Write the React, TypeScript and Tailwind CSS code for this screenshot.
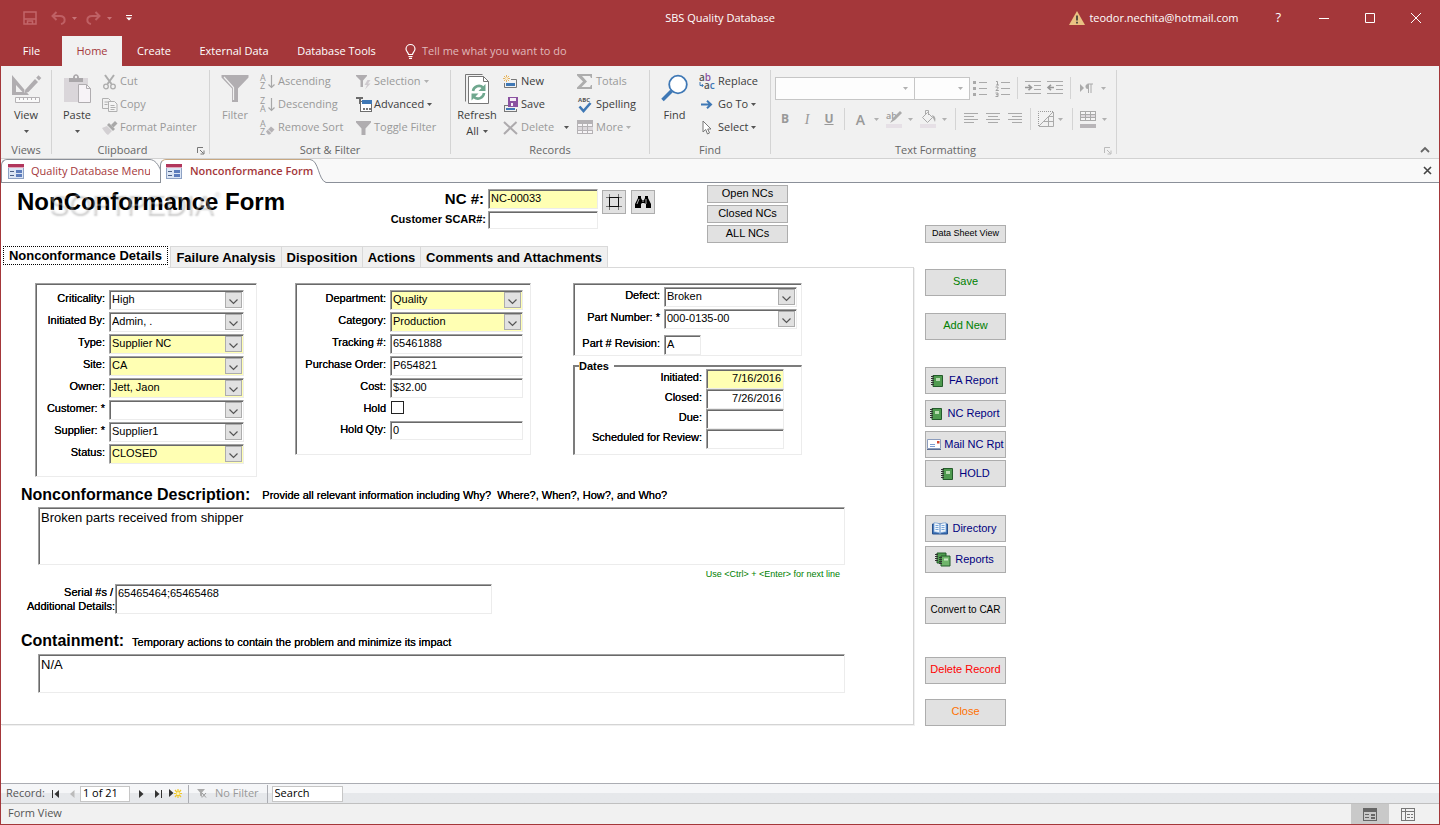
import type { ReactNode } from "react";

const SUNKEN =
  "border border-t-[#a0a0a0] border-l-[#a0a0a0] border-r-[#ececec] border-b-[#ececec] shadow-[inset_1px_1px_0_#696969]";
const HEAVY = "[text-shadow:0_0_0_#000]";

type SvgProps = { w: number; h: number; children: ReactNode; crisp?: boolean };
function Svg({ w, h, children, crisp }: SvgProps) {
  return (
    <svg
      width={w}
      height={h}
      viewBox={`0 0 ${w} ${h}`}
      fill="none"
      aria-hidden="true"
      className="shrink-0 overflow-visible"
      shapeRendering={crisp ? "crispEdges" : undefined}
    >
      {children}
    </svg>
  );
}

const Caret = ({ dim, white }: { dim?: boolean; white?: boolean }) => (
  <Svg w={5} h={3}>
    <path d="M0 0h5L2.5 3z" fill={white ? "#c77478" : dim ? "#b1b1b1" : "#555"} />
  </Svg>
);

/* ---------- ribbon icons ---------- */

const ViewIcon = () => (
  <Svg w={30} h={30}>
    <path d="M1 1v20h17L1 1zm4 10 6.500 7H5z" fill="#b0adb0" fillRule="evenodd" />
    <path d="M13 19l1-5L25 3l4 4-11 11z" fill="#f1f1f1" />
    <path d="M14.500 15.500 24 5l3 3-9.500 10-4.500 1.500z" fill="#b0adb0" />
    <path d="M25.200 3.800 27.500 1.200l2.800 2.800-2.300 2.500z" fill="#b0adb0" />
    <path d="M4.500 23.500h24v5h-24z" fill="#fafafa" stroke="#b5b2b5" />
    <path d="M8.500 24v2M12.500 24v2M16.500 24v2M20.500 24v2M24.500 24v2" stroke="#b5b2b5" />
  </Svg>
);
const PasteIcon = () => (
  <Svg w={26} h={31}>
    <path d="M0 5h24v24H0z" fill="#dad6da" />
    <path d="M5 9V5h4c0-5 6-5 6 0h4v4z" fill="#aaa7aa" />
    <circle cx="12" cy="4" r="1.200" fill="#f1f1f1" />
    <path d="M14.500 11.500h8l4 4v14h-12z" fill="#f7f3f7" stroke="#b0adb0" />
    <path d="M22.500 11.500v4h4" stroke="#b0adb0" />
  </Svg>
);
const CutIcon = () => (
  <Svg w={16} h={16}>
    <path d="M3 1l6.500 9M12 1L5.500 10" stroke="#adadad" strokeWidth="2" />
    <circle cx="4" cy="12.500" r="2.300" stroke="#adadad" strokeWidth="1.300" />
    <circle cx="11" cy="12.500" r="2.300" stroke="#adadad" strokeWidth="1.300" />
  </Svg>
);
const CopyIcon = () => (
  <Svg w={16} h={16}>
    <path d="M.5 1.500h6l2 2v8h-8zM2.500 5h4M2.500 7.500h3" stroke="#b0b0b0" />
    <path d="M6.500 4.500h6l2.500 2.500v7.500H6.500z" fill="#f4f4f4" stroke="#b0b0b0" />
    <path d="M8.500 8.500h4M8.500 10.500h5M8.500 12.500h4" stroke="#b0b0b0" />
  </Svg>
);
const PainterIcon = () => (
  <Svg w={16} h={16}>
    <path d="M0 8l5-2 5 5-4 4c-2-1-4-4-6-7z" fill="#d3d0d3" />
    <path d="M5 5l2-2 6 6-2 2z" fill="#a9a9a9" />
    <path d="M9 5l4-4 2.500 2.500-4 4z" fill="#a9a9a9" />
  </Svg>
);
const FilterBig = () => (
  <Svg w={28} h={30}>
    <path d="M.5 1h27v2.500L17 14.500V28h-6V14.500L.5 3.500z" fill="#b1aeb1" />
    <path d="M3 3l9.500 10.500V26" stroke="#f1f1f1" strokeWidth="1.200" />
  </Svg>
);
function SortIcon({ top, bottom }: { top: string; bottom: string }) {
  return (
    <Svg w={15} h={17}>
      <text x="0" y="7.500" fontSize="9" fontFamily="Open Sans, sans-serif" fill="#999">{top}</text>
      <text x="0" y="16" fontSize="9" fontFamily="Open Sans, sans-serif" fill="#999">{bottom}</text>
      <path d="M11.500 2v12M8.500 11.500l3 3 3-3" stroke="#a8a8a8" strokeWidth="1.200" />
    </Svg>
  );
}
const RemoveSortIcon = () => (
  <Svg w={15} h={17}>
    <text x="0" y="7.500" fontSize="9" fontFamily="Open Sans, sans-serif" fill="#999">A</text>
    <text x="0" y="16" fontSize="9" fontFamily="Open Sans, sans-serif" fill="#999">Z</text>
    <path d="M6 12.500l5-5 3.500 3-4.500 5H8z" fill="#b5b2b5" />
    <path d="M8 10.500l3.500 3.500" stroke="#f1f1f1" />
  </Svg>
);
const SelectionIcon = () => (
  <Svg w={16} h={16}>
    <path d="M0 1h11v1L7 6.500V13H4.500V6.500L0 2z" fill="#b0adb0" />
    <path d="M11.500 6l-3 5h2.500L9 15.500l5.500-6H12L14.500 6z" fill="#cfcbcf" />
  </Svg>
);
const AdvancedIcon = () => (
  <Svg w={16} h={16} crisp>
    <path d="M0 0h7v2H5v5H3V2H0z" fill="#6b6b6b" />
    <path d="M4.500 4.500h11v10h-11z" fill="#fff" stroke="#6e6e6e" />
    <path d="M6 3h10v4H6z" fill="#3f78b5" />
    <path d="M7 11h2v2H7zM10 11h2v2h-2zM13 11h2v2h-2z" fill="#777" />
  </Svg>
);
const ToggleFilterIcon = () => (
  <Svg w={16} h={16}>
    <path d="M0 1h15v1.500L9.500 8.500V15h-4V8.500L0 2.500z" fill="#b0adb0" />
  </Svg>
);
const RefreshIcon = () => (
  <Svg w={25} h={32}>
    <path d="M.5 28.500v-27h17" stroke="#777" />
    <path d="M3.500 3.500h15l5 5v22h-20z" fill="#fff" stroke="#777" />
    <path d="M18.500 3.500v5h5" stroke="#777" />
    <path d="M8 18a6 6 0 0 1 10-3.500" stroke="#6fa78e" strokeWidth="2.600" />
    <path d="M20.500 11v7h-7z" fill="#6fa78e" />
    <path d="M19 20a6 6 0 0 1-10 4" stroke="#6fa78e" strokeWidth="2.600" />
    <path d="M6.500 27.500v-7h7z" fill="#6fa78e" />
  </Svg>
);
const NewIcon = () => (
  <Svg w={15} h={14}>
    <path d="M3.500 0v7M0 3.500h7M1 1l5 5M6 1L1 6" stroke="#e6b45e" />
    <circle cx="3.500" cy="3.500" r="1.500" fill="#f8ecd4" />
    <path d="M8 4.500h5.500v8H1.500V8" stroke="#777" />
    <path d="M3 8h9v3H3z" fill="#3f78b5" />
  </Svg>
);
const SaveRecIcon = () => (
  <Svg w={16} h={16} crisp>
    <path d="M5 8.500H1.500v6h12v-3" stroke="#777" />
    <path d="M3 11h9v2H3z" fill="#3f78b5" />
    <path d="M5 0h10v10H5z" fill="#8b52a1" />
    <path d="M7 1h6v3H7zM8 6h4v3H8z" fill="#f4eef6" />
    <path d="M10 6h2v3h-2z" fill="#8b52a1" />
  </Svg>
);
const DeleteIcon = () => (
  <Svg w={15} h={14}>
    <path d="M1 1l13 12M13.500 1L1 13" stroke="#adaaad" strokeWidth="2" />
  </Svg>
);
const TotalsIcon = () => (
  <Svg w={16} h={15}>
    <path d="M0 0h15v4h-1l-1-2H5l5 5.500L4.500 13H13l1-2h1v4H0v-1.500l6-6L0 1.500z" fill="#adadad" />
  </Svg>
);
const SpellIcon = () => (
  <Svg w={16} h={17}>
    <text x="1" y="6" fontSize="6" fontWeight="700" fontFamily="Open Sans, sans-serif" fill="#555">ABC</text>
    <path d="M2.500 10.500l4 4.500 7-8" stroke="#3f78b5" strokeWidth="2.600" />
  </Svg>
);
const MoreIcon = () => (
  <Svg w={17} h={15} crisp>
    <path d="M.5.500h15v13H.5z" fill="#f7f5f7" stroke="#b5b2b5" />
    <path d="M1 1h15v3H1z" fill="#b5b2b5" />
    <path d="M1 7h15v3H1z" fill="#dcd8dc" />
    <path d="M5.500 4v10M10.500 4v10M1 6.500h15M1 10.500h15" stroke="#b5b2b5" />
  </Svg>
);
const FindIcon = () => (
  <Svg w={29} h={29}>
    <circle cx="18" cy="10.500" r="8.800" fill="#fff" stroke="#3f78b5" strokeWidth="1.800" />
    <path d="M11.500 17L2.500 26" stroke="#3f78b5" strokeWidth="3.600" />
  </Svg>
);
const ReplaceIcon = () => (
  <Svg w={17} h={17}>
    <text x="0" y="7.500" fontSize="10" fontWeight="600" fontFamily="Open Sans, sans-serif" fill="#555">
      a<tspan fill="#8b52a1">b</tspan>
    </text>
    <text x="5" y="15.500" fontSize="10" fontWeight="600" fontFamily="Open Sans, sans-serif" fill="#555">
      a<tspan fill="#3f78b5">c</tspan>
    </text>
    <path d="M1 9v3.500h3M2.800 11l1.500 1.500L2.800 14" stroke="#3f78b5" />
  </Svg>
);
const GoToIcon = () => (
  <Svg w={12} h={9}>
    <path d="M0 4.500h10M6 .8l4 3.700-4 3.700" stroke="#3f78b5" strokeWidth="2" />
  </Svg>
);
const SelectIcon = () => (
  <Svg w={10} h={15}>
    <path d="M1 1v11l2.700-2.500L5.500 14l2-1-1.800-4H9z" fill="#fff" stroke="#777" />
  </Svg>
);

/* ---------- shell ---------- */

function TitleBar() {
  return (
    <header className="bg-[#a4373a] text-white">
      <div className="grid h-9 grid-cols-[1fr_auto_1fr] items-center">
        <div className="flex items-center pl-[22px]">
          <button aria-label="Save" className="mr-[14px]">
            <Svg w={14} h={14}>
              <path d="M1 1h12v12H1zM1 8h12M4.500 13v-3h5v3" stroke="#c26569" strokeWidth="1.500" />
            </Svg>
          </button>
          <button aria-label="Undo" className="mr-[6px]">
            <Svg w={15} h={14}>
              <path d="M5.500 1L1.500 5l4 4M2 5h7c6 0 6 7 1 8" stroke="#bf6064" strokeWidth="2" />
            </Svg>
          </button>
          <Caret white />
          <button aria-label="Redo" className="mr-[6px] ml-[9px]">
            <Svg w={15} h={14}>
              <path d="M9.500 1l4 4-4 4M13 5H6c-6 0-6 7-1 8" stroke="#bf6064" strokeWidth="2" />
            </Svg>
          </button>
          <Caret white />
          <button aria-label="Customize Quick Access Toolbar" className="ml-[14px]">
            <Svg w={6} h={6}>
              <path d="M0 0h6v1H0zM0 2.500h6L3 5.500z" fill="#fff" />
            </Svg>
          </button>
        </div>
        <h1 className="text-[11px]">SBS Quality Database</h1>
        <div className="flex items-center justify-end pr-[18px]">
          <Svg w={16} h={14}>
            <path d="M8 0l8 14H0z" fill="#eac282" />
            <path d="M8 4.500V9.500M8 10.800v1.700" stroke="#333" strokeWidth="1.600" />
          </Svg>
          <span className="ml-1 w-[156px] text-[11px]">teodor.nechita@hotmail.com</span>
          <button aria-label="Help" className="ml-[30px] text-[13px]">?</button>
          <button aria-label="Minimize" className="ml-[38px]">
            <Svg w={10} h={10}><path d="M0 5.500h10" stroke="#fff" /></Svg>
          </button>
          <button aria-label="Maximize" className="ml-9">
            <Svg w={10} h={10}><path d="M.5.500h9v9h-9z" stroke="#fff" /></Svg>
          </button>
          <button aria-label="Close window" className="ml-9">
            <Svg w={10} h={10}><path d="M0 0l10 10M10 0L0 10" stroke="#fff" /></Svg>
          </button>
        </div>
      </div>
      <nav className="flex h-[30px] items-stretch text-[11px]">
        <button className="w-[61px]">File</button>
        <button className="w-[60px] bg-[#f1f1f1] text-[#a4373a]">Home</button>
        <button className="w-16">Create</button>
        <button className="w-24">External Data</button>
        <button className="w-[109px]">Database Tools</button>
        <button className="ml-[14px] flex items-center gap-[6px] text-[#e0b9ba]">
          <Svg w={11} h={15}>
            <path d="M3.500 10.500C3.500 8.500 1 7.500 1 5a4.500 4.500 0 0 1 9 0c0 2.500-2.500 3.500-2.500 5.500zM3.500 12.500h4M4 14.300h3" stroke="#fff" strokeWidth="1.200" />
          </Svg>
          Tell me what you want to do
        </button>
      </nav>
    </header>
  );
}

function Group({ label, width, launcher, children }: { label: string; width: string; launcher?: ReactNode; children: ReactNode }) {
  return (
    <section aria-label={label} className={`${width} my-1 flex shrink-0 flex-col border-r border-[#d4d4d4]`}>
      <div className="flex h-[69px] shrink-0">{children}</div>
      <div className={`relative h-[15px] pt-[3px] text-center text-[11px] leading-4 text-[#666] ${launcher ? "pr-4" : ""}`}>
        {label}
        {launcher}
      </div>
    </section>
  );
}

const Launcher = ({ dim }: { dim?: boolean }) => (
  <button aria-label="More options" className="absolute top-2 right-1">
    <Svg w={8} h={8}>
      <path d="M.5 6V.5H6M3 3l3.500 3.500M7 3.500V7H3.500" stroke={dim ? "#bbb" : "#777"} />
    </Svg>
  </button>
);

function Big({ icon, label, dim, width, children }: { icon: ReactNode; label: string; dim?: boolean; width: string; children?: ReactNode }) {
  return (
    <button className={`${width} flex shrink-0 flex-col items-center pt-[3px] text-[11px] leading-4 ${dim ? "text-[#999]" : "text-[#3c3c3c]"}`}>
      <span className="flex h-[31px] items-center">{icon}</span>
      <span className="mt-[3px]">{label}</span>
      <span className="flex h-4 items-center gap-1">{children}</span>
    </button>
  );
}

function Small({ icon, label, dim, caret, iconW = "w-[18px]" }: { icon: ReactNode; label: string; dim?: boolean; caret?: boolean; iconW?: string }) {
  return (
    <button className={`flex h-[23px] items-center text-[11px] whitespace-nowrap ${dim ? "text-[#999]" : "text-[#3c3c3c]"}`}>
      <span className={`${iconW} flex shrink-0 items-center`}>{icon}</span>
      {label}
      {caret && <span className="ml-[3px]"><Caret dim={dim} /></span>}
    </button>
  );
}

const Sep = () => <span className="block h-[22px] w-px bg-[#d4d4d4]" />;
const Lines = ({ rows }: { rows: [number, number][] }) => (
  <Svg w={15} h={14} crisp>
    {rows.map(([a, b], i) => (
      <path key={i} d={`M${a} ${i * 3 + 1.5}H${b}`} stroke="#aaa" />
    ))}
  </Svg>
);

function TextFormatting() {
  return (
    <div className="flex flex-col pl-1">
      <div className="mt-[7px] flex h-[22px] items-center">
        <select aria-label="Font" disabled className="h-[23px] w-[140px] appearance-none border border-[#c6c6c6] bg-[#fdfdfd]" />
        <span className="pointer-events-none -ml-3 w-[11px]"><Caret dim /></span>
        <select aria-label="Font size" disabled className="h-[23px] w-14 appearance-none border border-[#c6c6c6] bg-[#fdfdfd]" />
        <span className="pointer-events-none -ml-3 w-[15px]"><Caret dim /></span>
        <button aria-label="Bullets">
          <Svg w={14} h={16}>
            <path d="M6 2.500h8M6 8.500h8M6 14.500h8" stroke="#aaa" />
            <path d="M0 1h3v3H0zM0 7h3v3H0zM0 13h3v3H0z" fill="#aaa" />
          </Svg>
        </button>
        <button aria-label="Numbering" className="ml-2">
          <Svg w={15} h={17}>
            <path d="M6 2.500h9M6 8.500h9M6 14.500h9" stroke="#aaa" />
            <path d="M1 1.500h1.500V5M1 5h3M.5 7h2.500v1.500L.8 10.500h3M.5 13h2.500v3.500H.5M1 14.700h2" stroke="#999" strokeWidth=".9" />
          </Svg>
        </button>
        <span className="mx-[7px]"><Sep /></span>
        <button aria-label="Increase indent">
          <Svg w={16} h={14}>
            <path d="M0 .5h16M9 4.500h7M9 8.500h7M0 12.500h16" stroke="#aaa" />
            <path d="M0 6.500h6M3.500 3.800l3 2.700-3 2.700" stroke="#999" strokeWidth="1.600" />
          </Svg>
        </button>
        <button aria-label="Decrease indent" className="ml-[6px]">
          <Svg w={16} h={14}>
            <path d="M0 .5h16M9 4.500h7M9 8.500h7M0 12.500h16" stroke="#aaa" />
            <path d="M7 6.500H1M4 3.800L1 6.500l3 2.700" stroke="#999" strokeWidth="1.600" />
          </Svg>
        </button>
        <span className="mx-[7px]"><Sep /></span>
        <button aria-label="Text direction" className="ml-[2px] flex items-center gap-2">
          <Svg w={13} h={11}>
            <path d="M0 1v8l4-4z" fill="#aaa" />
            <path d="M8 1a2.500 2.500 0 0 0 0 5z" fill="#aaa" />
            <path d="M8.500 10V1M11 10V1M7.500 1H13" stroke="#aaa" />
          </Svg>
          <Caret dim />
        </button>
      </div>
      <div className="mt-[9px] flex h-[22px] items-center pl-[5px] text-[12px] text-[#999]">
        <button className="w-[10px] font-bold">B</button>
        <button className="ml-3 w-[10px] font-['Liberation_Serif',serif] text-[14px] italic">I</button>
        <button className="ml-3 w-[10px] font-bold underline">U</button>
        <span className="mr-[10px] ml-[10px]"><Sep /></span>
        <button aria-label="Font color" className="flex items-center gap-2">
          <span className="w-[11px] text-[14px] font-semibold">A</span><Caret dim />
        </button>
        <button aria-label="Highlight" className="ml-[7px] flex items-center gap-[6px]">
          <Svg w={16} h={18}>
            <path d="M0 14h16v4H0z" fill="#e6e0e6" />
            <text x="0" y="9" fontSize="9" fontWeight="600" fontFamily="Open Sans, sans-serif" fill="#999">ab</text>
            <path d="M4 13l3-5 7-7 2 2-7 7z" fill="#aaa" />
          </Svg>
          <Caret dim />
        </button>
        <button aria-label="Background color" className="ml-[7px] flex items-center gap-[6px]">
          <Svg w={16} h={18}>
            <path d="M0 14h16v4H0z" fill="#e6e0e6" />
            <path d="M7.500 2.500l5 5-5 5-5-5zM5.500 5V.5h3V5" stroke="#aaa" />
            <path d="M12 5c3 1 4 3 3 7l-2-4z" fill="#aaa" />
          </Svg>
          <Caret dim />
        </button>
        <span className="mr-2 ml-2"><Sep /></span>
        <button aria-label="Align left"><Lines rows={[[0, 14], [0, 10], [0, 14], [0, 10]]} /></button>
        <button aria-label="Align center" className="ml-[7px]"><Lines rows={[[0, 14], [2, 12], [0, 14], [2, 12]]} /></button>
        <button aria-label="Align right" className="ml-[7px]"><Lines rows={[[0, 14], [4, 14], [0, 14], [4, 14]]} /></button>
        <span className="mr-[7px] ml-[7px]"><Sep /></span>
        <button aria-label="Gridlines" className="flex items-center gap-1">
          <Svg w={16} h={16}>
            <path d="M.5 15V.5H15" stroke="#999" strokeDasharray="1 1" />
            <path d="M15.500 1v14.500H1M1 15L15 1M10.500 6v9M6 10.500h9M15 5.500h-4" stroke="#aaa" />
          </Svg>
          <Caret dim />
        </button>
        <span className="mr-[7px] ml-[9px]"><Sep /></span>
        <button aria-label="Alternate row color" className="flex items-center gap-[6px]">
          <Svg w={16} h={17} crisp>
            <path d="M0 0h16v10H0z" fill="#aaa" />
            <path d="M1 1h4v2H1zM6 1h4v2H6zM11 1h4v2h-4zM1 7h4v2H1zM6 7h4v2H6zM11 7h4v2h-4z" fill="#f5f5f5" />
            <path d="M1 4h4v2H1zM6 4h4v2H6zM11 4h4v2h-4z" fill="#dcd8dc" />
            <path d="M0 13h16v4H0z" fill="#b8b5b8" />
          </Svg>
          <Caret dim />
        </button>
      </div>
    </div>
  );
}

function Ribbon() {
  return (
    <div className="flex h-[93px] shrink-0 border-b border-[#d2d2d2] bg-[#f1f1f1]">
      <Group label="Views" width="w-[51px]">
        <Big icon={<ViewIcon />} label="View" width="w-[50px]"><Caret /></Big>
      </Group>
      <Group label="Clipboard" width="w-[158px]" launcher={<Launcher />}>
        <Big icon={<PasteIcon />} label="Paste" width="w-[50px]"><Caret /></Big>
        <div className="flex flex-col">
          <Small icon={<CutIcon />} label="Cut" dim />
          <Small icon={<CopyIcon />} label="Copy" dim />
          <Small icon={<PainterIcon />} label="Format Painter" dim />
        </div>
      </Group>
      <Group label="Sort & Filter" width="w-[241px]">
        <Big icon={<FilterBig />} label="Filter" dim width="w-[50px]" />
        <div className="flex w-[96px] flex-col">
          <Small icon={<SortIcon top="A" bottom="Z" />} label="Ascending" dim />
          <Small icon={<SortIcon top="Z" bottom="A" />} label="Descending" dim />
          <Small icon={<RemoveSortIcon />} label="Remove Sort" dim />
        </div>
        <div className="flex flex-col">
          <Small icon={<SelectionIcon />} label="Selection" dim caret />
          <Small icon={<AdvancedIcon />} label="Advanced" caret />
          <Small icon={<ToggleFilterIcon />} label="Toggle Filter" dim />
        </div>
      </Group>
      <Group label="Records" width="w-[199px]">
        <Big icon={<RefreshIcon />} label="Refresh" width="w-[52px]">All <Caret /></Big>
        <div className="flex w-[74px] flex-col">
          <Small icon={<NewIcon />} label="New" />
          <Small icon={<SaveRecIcon />} label="Save" />
          <div className="flex items-center justify-between pr-2">
            <Small icon={<DeleteIcon />} label="Delete" dim />
            <Caret />
          </div>
        </div>
        <div className="flex flex-col">
          <Small icon={<TotalsIcon />} label="Totals" dim iconW="w-[19px]" />
          <Small icon={<SpellIcon />} label="Spelling" iconW="w-[19px]" />
          <Small icon={<MoreIcon />} label="More" dim caret iconW="w-[19px]" />
        </div>
      </Group>
      <Group label="Find" width="w-[121px]">
        <Big icon={<FindIcon />} label="Find" width="w-[49px]" />
        <div className="flex flex-col">
          <Small icon={<ReplaceIcon />} label="Replace" iconW="w-[19px]" />
          <Small icon={<span className="pl-[2px]"><GoToIcon /></span>} label="Go To" caret iconW="w-[19px]" />
          <Small icon={<span className="pl-[3px]"><SelectIcon /></span>} label="Select" caret iconW="w-[19px]" />
        </div>
      </Group>
      <Group label="Text Formatting" width="w-[346px]" launcher={<Launcher dim />}>
        <TextFormatting />
      </Group>
      <button aria-label="Collapse the ribbon" className="mt-auto mr-[9px] mb-[5px] ml-auto">
        <Svg w={10} h={6}><path d="M1 5l4-4 4 4" stroke="#666" strokeWidth="1.800" /></Svg>
      </button>
    </div>
  );
}

const FormIcon = () => (
  <Svg w={16} h={15} crisp>
    <path d="M0 0h16v15H0z" fill="#8ea2c4" />
    <path d="M0 0h16v3H0z" fill="#b1365c" />
    <path d="M0 3h16v1H0z" fill="#e2a8ba" />
    <path d="M1 4h14v10H1z" fill="#dbe5f4" />
    <path d="M2 7h4v1H2zM2 11h4v1H2z" fill="#4b5f86" />
    <path d="M8 6h6v3H8zM8 10h6v3H8z" fill="#5d7dbc" />
  </Svg>
);

function DocTabs() {
  return (
    <div className="flex h-6 shrink-0 items-stretch border-b border-[#8b9099] bg-[#f9f9f9]" role="tablist">
      <button role="tab" className="flex items-stretch">
        <span className="flex items-center gap-[7px] rounded-tl-md border-t border-l border-[#8b9099] bg-white pl-[6px] text-[11px] whitespace-nowrap text-[#a4373a]">
          <FormIcon />
          <span className="w-[119px] text-left">Quality Database Menu</span>
        </span>
        <svg width="11" height="23" viewBox="0 0 11 23" className="-mr-px shrink-0" aria-hidden="true">
          <path d="M0 0.500C5 1 8 5 11 12V23H0z" fill="#fff" />
          <path d="M0 0.500C5 1 8 5 11 12" fill="none" stroke="#8b9099" />
        </svg>
      </button>
      <button role="tab" aria-selected="true" className="-mb-px flex items-stretch">
        <span className="z-10 flex items-center gap-2 rounded-tl-md border-t border-l border-t-[#c7a882] border-l-[#8b9099] bg-white pl-[5px] text-[11px] font-semibold whitespace-nowrap text-[#a4373a]">
          <FormIcon />
          <span className="w-[120px] text-left">Nonconformance Form</span>
        </span>
        <svg width="16" height="24" viewBox="0 0 16 24" className="shrink-0" aria-hidden="true">
          <path d="M0 0.500C9 1 8 21 16 23.500V24H0z" fill="#fff" />
          <path d="M0 0.500C9 1 8 21 16 23.500" fill="none" stroke="#8b9099" />
        </svg>
      </button>
      <button aria-label="Close tab" className="mr-[7px] ml-auto">
        <Svg w={9} h={9}><path d="M1 1l7 7M8 1L1 8" stroke="#444" strokeWidth="1.600" /></Svg>
      </button>
    </div>
  );
}

/* ---------- form controls ---------- */

type FieldProps = { id: string; label: string; value?: string; yellow?: boolean; labelW: string; w: string; h?: string; right?: boolean };

function Label({ id, w, children }: { id: string; w: string; children: ReactNode }) {
  return (
    <label htmlFor={id} className={`${w} ${HEAVY} shrink-0 text-right text-[11px] leading-4 whitespace-nowrap`}>
      {children}
    </label>
  );
}

function TextField({ id, label, value = "", yellow, labelW, w, h = "h-5", right }: FieldProps) {
  return (
    <div className="flex gap-1">
      <Label id={id} w={labelW}>{label}</Label>
      <input
        id={id}
        defaultValue={value}
        className={`${SUNKEN} ${w} ${h} ${yellow ? "bg-[#ffffb3]" : "bg-white"} ${right ? "text-right" : ""} px-[2px] pb-[2px] text-[11px] outline-none`}
      />
    </div>
  );
}

function SelectField({ id, label, value = "", yellow, labelW, w }: FieldProps) {
  return (
    <div className="flex gap-1">
      <Label id={id} w={labelW}>{label}</Label>
      <div className={`relative ${w}`}>
        <select
          id={id}
          defaultValue={value}
          className={`${SUNKEN} ${yellow ? "bg-[#ffffb3]" : "bg-white"} block h-5 w-full appearance-none px-[2px] pb-[2px] text-[11px] outline-none`}
        >
          <option>{value}</option>
        </select>
        <span className="pointer-events-none absolute top-[2px] right-[2px] flex h-4 w-[17px] items-center justify-center border border-[#adadad] bg-[#e1e1e1] pt-[2px]">
          <Svg w={9} h={5}><path d="M.5.500l4 4 4-4" stroke="#555" strokeWidth="1.200" /></Svg>
        </span>
      </div>
    </div>
  );
}

function Btn({ children, className }: { children: ReactNode; className: string }) {
  return (
    <button className={`flex items-center justify-center border border-[#adadad] bg-[#e1e1e1] whitespace-nowrap ${className}`}>
      {children}
    </button>
  );
}

const Book = () => (
  <Svg w={12} h={12}>
    <path d="M2 .5h9.500v11H2z" fill="#4f9a4f" stroke="#245c2b" />
    <path d="M5 3h4v3H5z" fill="#b8dcb0" />
    <path d="M0 1.500h3M0 3.500h3M0 5.500h3M0 7.500h3M0 9.500h3" stroke="#333" />
  </Svg>
);
const Books = () => (
  <Svg w={16} h={15}>
    <path d="M2 1h9v10H2z" fill="#4f9a4f" stroke="#245c2b" />
    <path d="M6 4h9v10H6z" fill="#6fb56a" stroke="#245c2b" />
    <path d="M9 6.500h4v2H9z" fill="#cdeac6" />
    <path d="M0 2.500h3M0 4.500h3M0 6.500h3M0 8.500h3M4 5.500h3M4 7.500h3M4 9.500h3M4 11.500h3" stroke="#333" />
  </Svg>
);
const Mail = () => (
  <Svg w={14} h={11}>
    <path d="M.5.500h13v9H.5z" fill="#fff" stroke="#8c9dbd" />
    <path d="M0 10.500h14" stroke="#5a6b90" />
    <path d="M10 2h2.500v2.500H10z" fill="#d4452f" />
    <path d="M3 5.500h5M3 7.500h5" stroke="#7f9dd0" />
  </Svg>
);
const OpenBook = () => (
  <Svg w={16} h={13}>
    <path d="M.5 2v10h15V2z" fill="#3c72b8" stroke="#28508c" />
    <path d="M2 .8c2.500 0 5 .5 6 1.700v9c-1-1-3.500-1.500-6-1.500zM14 .8c-2.500 0-5 .5-6 1.700v9c1-1 3.500-1.500 6-1.500z" fill="#eef5fc" stroke="#6b9ad0" strokeWidth=".7" />
    <path d="M3.500 3.500h3M3.500 5.500h3M3.500 7.500h3M9.500 3.500h3M9.500 5.500h3M9.500 7.500h3" stroke="#79a6d8" />
  </Svg>
);

function FormHeader() {
  return (
    <div className="flex h-[63px] items-start">
      <div className="relative w-[380px] shrink-0 pt-1 pl-4">
        <h2 className="text-[24px] leading-[30px] font-bold whitespace-nowrap">NonConformance Form</h2>
        <span className="pointer-events-none absolute top-[6px] left-12 flex text-[29px] leading-[30px] text-white/25 select-none [text-shadow:1px_2px_2px_rgba(0,0,0,0.2)]" aria-hidden="true">
          SOFTPEDIA
          <span className="text-[9px] leading-[10px]">®</span>
        </span>
      </div>
      <div className="mt-[6px] flex w-[217px] shrink-0 flex-col gap-[2px]">
        <div className="flex items-start justify-end gap-1">
          <label htmlFor="nc" className="text-[15px] leading-[20px] font-bold">NC #:</label>
          <input id="nc" defaultValue="NC-00033" className={`${SUNKEN} h-5 w-[110px] bg-[#ffffb3] px-[2px] pb-[2px] text-[11px] outline-none`} />
        </div>
        <div className="flex items-start justify-end gap-[2px]">
          <label htmlFor="scar" className="text-[11px] leading-4 font-bold whitespace-nowrap">Customer SCAR#:</label>
          <input id="scar" defaultValue="" className={`${SUNKEN} h-[18px] w-[110px] bg-white px-[2px] text-[11px] outline-none`} />
        </div>
      </div>
      <div className="mt-[7px] ml-1 flex gap-[5px]">
        <button aria-label="New number" className="flex size-6 items-center justify-center border border-[#adadad] bg-[#e1e1e1]">
          <Svg w={16} h={16} crisp>
            <path d="M3.500 0v16M12.500 0v16M0 3.500h16M0 12.500h16" stroke="#777" />
            <path d="M3.500 3.500h9v9h-9z" stroke="#111" />
          </Svg>
        </button>
        <button aria-label="Find" className="flex size-6 items-center justify-center border border-[#adadad] bg-[#e1e1e1]">
          <Svg w={16} h={14}>
            <path d="M3 1h3v2l1 2h2l1-2V1h3v2l3 6v4h-5V9L9 8H7L6 9v4H0V9l3-6z" fill="#000" />
            <path d="M4 4L2 9M11 4v5M8 4v3" stroke="#ddd" strokeWidth=".8" />
          </Svg>
        </button>
      </div>
      <div className="mt-[2px] ml-[52px] flex flex-col gap-[2px] text-[11px]">
        <Btn className="h-[18px] w-[81px] pb-[2px]">Open NCs</Btn>
        <Btn className="h-[18px] w-[81px] pb-[2px]">Closed NCs</Btn>
        <Btn className="h-[18px] w-[81px] pb-[2px]">ALL NCs</Btn>
      </div>
    </div>
  );
}

function FormTabs() {
  const tab = "flex h-[21px] items-center border-t border-r border-[#d9d9d9] bg-[#f0f0f0] pt-[2px] whitespace-nowrap";
  return (
    <div role="tablist" className="flex items-end text-[13px] font-bold">
      <button role="tab" aria-selected="true" className="mr-[2px] mb-[2px] ml-[2px] flex h-[19px] w-[165px] items-center justify-center border border-dotted border-black whitespace-nowrap">
        Nonconformance Details
      </button>
      <button role="tab" className={`${tab} w-[112px] justify-center border-l`}>Failure Analysis</button>
      <button role="tab" className={`${tab} w-[81px] justify-center`}>Disposition</button>
      <button role="tab" className={`${tab} w-[58px] justify-center`}>Actions</button>
      <button role="tab" className={`${tab} w-[187px] justify-center`}>Comments and Attachments</button>
    </div>
  );
}

function Details() {
  const a = { labelW: "w-[69px]", w: "w-[135px]" };
  const b = { labelW: "w-[90px]", w: "w-[133px]" };
  const c = { labelW: "w-[86px]", w: "w-[133px]" };
  const d = { labelW: "w-[127px]", w: "w-[78px]" };
  return (
    <div className="border-r border-b border-[#d4d4d4] pb-[31px] shadow-[1px_1px_0_#f0f0f0]">
      <div className="ml-[167px] h-px bg-[#d9d9d9]" />
      <div className="flex items-start pt-[15px] pl-[34px]">
        <div className={`${SUNKEN} flex h-[194px] w-[222px] flex-col gap-[2px] pt-[6px]`}>
          <SelectField id="criticality" label="Criticality:" value="High" {...a} />
          <SelectField id="initiatedBy" label="Initiated By:" value="Admin, ." {...a} />
          <SelectField id="type" label="Type:" value="Supplier NC" yellow {...a} />
          <SelectField id="site" label="Site:" value="CA" yellow {...a} />
          <SelectField id="owner" label="Owner:" value="Jett, Jaon" yellow {...a} />
          <SelectField id="customer" label="Customer: *" {...a} />
          <SelectField id="supplier" label="Supplier: *" value="Supplier1" {...a} />
          <SelectField id="status" label="Status:" value="CLOSED" yellow {...a} />
        </div>
        <div className={`${SUNKEN} ml-[38px] flex h-[172px] w-[236px] flex-col gap-[2px] pt-[6px]`}>
          <SelectField id="department" label="Department:" value="Quality" yellow {...b} />
          <SelectField id="category" label="Category:" value="Production" yellow {...b} />
          <TextField id="tracking" label="Tracking #:" value="65461888" {...b} />
          <TextField id="po" label="Purchase Order:" value="P654821" {...b} />
          <TextField id="cost" label="Cost:" value="$32.00" {...b} />
          <div className="flex h-[19px] gap-[5px]">
            <Label id="hold" w="w-[90px]">Hold</Label>
            <input id="hold" type="checkbox" className="mt-[1px] size-[13px] appearance-none border border-[#222] bg-white" />
          </div>
          <TextField id="holdQty" label="Hold Qty:" value="0" {...b} h="h-[19px]" />
        </div>
        <div className="ml-[42px] w-[229px]">
          <div className={`${SUNKEN} flex h-[73px] flex-col gap-[2px] pt-[3px]`}>
            <SelectField id="defect" label="Defect:" value="Broken" {...c} />
            <SelectField id="partNumber" label="Part Number: *" value="000-0135-00" {...c} />
            <div className="mt-1">
              <TextField id="revision" label="Part # Revision:" value="A" labelW="w-[86px]" w="w-[37px]" />
            </div>
          </div>
          <fieldset className="mt-[3px] h-[96px] border-t-2 border-r border-b border-l-2 border-t-[#7c7c7c] border-r-[#ececec] border-b-[#ececec] border-l-[#7c7c7c]">
            <legend className="ml-1 pr-[5px] text-[11px] leading-[14px] font-bold">Dates</legend>
            <div className="-mt-1 flex flex-col">
              <TextField id="initiated" label="Initiated:" value="7/16/2016" yellow right {...d} />
              <TextField id="closed" label="Closed:" value="7/26/2016" right {...d} />
              <TextField id="due" label="Due:" {...d} />
              <TextField id="review" label="Scheduled for Review:" {...d} />
            </div>
          </fieldset>
        </div>
      </div>
      <div className="mt-2 flex h-5 items-center gap-3 pl-5">
        <label htmlFor="description" className="text-[16px] leading-5 font-bold whitespace-nowrap">Nonconformance Description:</label>
        <p className={`${HEAVY} text-[11px] whitespace-pre`}>{"Provide all relevant information including Why?  Where?, When?, How?, and Who?"}</p>
      </div>
      <div className="mt-[2px] ml-[37px] w-[807px]">
        <textarea id="description" defaultValue="Broken parts received from shipper" className={`${SUNKEN} block h-[58px] w-full resize-none bg-white px-[2px] pt-[2px] text-[13px] leading-4 outline-none`} />
        <p className="mt-[2px] pr-[5px] text-right text-[9px] leading-[14px] text-[#008000]">Use &lt;Ctrl&gt; + &lt;Enter&gt; for next line</p>
      </div>
      <div className="mt-[3px] flex">
        <label htmlFor="serials" className={`${HEAVY} w-[114px] shrink-0 pt-px text-right text-[11px] leading-[14px] whitespace-nowrap`}>
          <span className="pr-[2px]">Serial #s /</span><br />Additional Details:
        </label>
        <textarea id="serials" defaultValue="65465464;65465468" className={`${SUNKEN} block h-[30px] w-[377px] resize-none bg-white px-[2px] pt-[1px] text-[11px] leading-[14px] outline-none`} />
      </div>
      <div className="mt-[17px] flex h-5 items-center gap-2 pl-5">
        <label htmlFor="containment" className="text-[16px] leading-5 font-bold">Containment:</label>
        <p className={`${HEAVY} pt-[2px] text-[11px] whitespace-nowrap`}>Temporary actions to contain the problem and minimize its impact</p>
      </div>
      <textarea id="containment" defaultValue="N/A" className={`${SUNKEN} mt-[3px] ml-[37px] block h-[39px] w-[807px] resize-none bg-white px-[2px] pt-[2px] text-[13px] leading-4 outline-none`} />
    </div>
  );
}

function SideButtons() {
  const navy = "text-[#00007f] text-[11px]";
  return (
    <aside className="ml-[11px] flex w-[81px] shrink-0 flex-col pt-[42px]">
      <Btn className="h-[18px] pb-px text-[9px]">Data Sheet View</Btn>
      <Btn className="mt-[26px] h-[27px] pb-[2px] text-[11px] text-[#008000]">Save</Btn>
      <Btn className="mt-[17px] h-[27px] pb-[2px] text-[11px] text-[#008000]">Add New</Btn>
      <Btn className={`mt-[27px] h-[27px] gap-[6px] pr-[2px] ${navy}`}><Book />FA Report</Btn>
      <Btn className={`mt-[6px] h-[27px] gap-[6px] pr-[2px] ${navy}`}><Book />NC Report</Btn>
      <Btn className={`mt-1 h-[27px] gap-[3px] ${navy}`}><Mail />Mail NC Rpt</Btn>
      <Btn className={`mt-[2px] h-[27px] gap-[6px] ${navy}`}><Book />HOLD</Btn>
      <Btn className={`mt-7 h-[27px] gap-1 pr-[2px] ${navy}`}><OpenBook />Directory</Btn>
      <Btn className={`mt-1 h-[27px] gap-1 pr-[2px] ${navy}`}><Books />Reports</Btn>
      <Btn className="mt-6 h-[27px] pb-[2px] text-[10px]">Convert to CAR</Btn>
      <Btn className="mt-[33px] h-[27px] pb-[2px] text-[11px] text-[#ff0000]">Delete Record</Btn>
      <Btn className="mt-[15px] h-[27px] pb-[2px] text-[11px] text-[#ff7000]">Close</Btn>
    </aside>
  );
}

function RecordNav() {
  return (
    <div className="flex h-5 shrink-0 items-center border-t border-[#abadb3] bg-linear-to-b from-[#f5f6f8] from-50% to-[#e6e8eb] to-50% pl-[5px] text-[11px] text-[#555]">
      <span>Record:</span>
      <button aria-label="First record" className="ml-[7px]">
        <Svg w={8} h={8}><path d="M.5 0v8" stroke="#333" /><path d="M7 0v8L2.500 4z" fill="#333" /></Svg>
      </button>
      <button aria-label="Previous record" className="ml-[10px]">
        <Svg w={5} h={8}><path d="M4.500 0v8L0 4z" fill="#bbb" /></Svg>
      </button>
      <input aria-label="Current record" defaultValue="1 of 21" className="ml-[5px] h-4 w-[50px] border border-[#c6c6c6] bg-white px-[2px] text-[11px] text-black outline-none" />
      <button aria-label="Next record" className="ml-[9px]">
        <Svg w={5} h={8}><path d="M0 0v8l4.500-4z" fill="#333" /></Svg>
      </button>
      <button aria-label="Last record" className="ml-[11px]">
        <Svg w={8} h={8}><path d="M6.500 0v8" stroke="#333" /><path d="M0 0v8l4.500-4z" fill="#333" /></Svg>
      </button>
      <button aria-label="New record" className="ml-[6px]">
        <Svg w={13} h={9}>
          <path d="M0 0v8l4.500-4z" fill="#333" />
          <path d="M9 0v9M5 4.500h8M6 1l6 7M12 1L6 8" stroke="#f0c92c" strokeWidth="1.200" />
          <circle cx="9" cy="4.500" r="1.500" fill="#fff6c0" />
        </Svg>
      </button>
      <span className="ml-[6px] h-[18px] w-px bg-[#abadb3]" />
      <button className="flex items-center gap-2 pl-2 text-[#999]">
        <Svg w={10} h={9}>
          <path d="M0 0h8L5 3.500V8L3 6.500v-3z" fill="#aaa" />
          <path d="M5 4l4 4.500M9 4L5 8.500" stroke="#999" />
        </Svg>
        No Filter
      </button>
      <span className="ml-[8px] h-[18px] w-px bg-[#abadb3]" />
      <input aria-label="Search" defaultValue="Search" className="ml-1 h-4 w-[71px] border border-[#c6c6c6] bg-white px-[2px] text-[11px] text-black outline-none" />
    </div>
  );
}

function StatusBar() {
  return (
    <footer className="flex h-[21px] shrink-0 items-stretch border-t border-[#c0c0c0] bg-[#f1f1f1] text-[11px] text-[#555]">
      <span className="flex items-center pb-[2px] pl-[7px]">Form View</span>
      <button aria-label="Form view" className="ml-auto flex w-[38px] items-center justify-center bg-[#c9c9c9]">
        <Svg w={14} h={13} crisp>
          <path d="M.5.500h13v12H.5z" stroke="#666" />
          <path d="M0 0h14v4H0z" fill="#666" />
          <path d="M2 6h4v1H2zM2 9h4v1H2zM8 6h4v2H8zM8 9h4v2H8z" fill="#666" />
        </Svg>
      </button>
      <button aria-label="Layout view" className="mr-3 flex w-[38px] items-center justify-center">
        <Svg w={14} h={13} crisp>
          <path d="M.5.500h13v12H.5zM0 3.500h14M4.500 0v13" stroke="#777" />
          <path d="M6 6h3v1H6zM10 6h2v1h-2zM6 9h3v1H6zM10 9h2v1h-2z" fill="#777" />
        </Svg>
      </button>
    </footer>
  );
}

export default function App() {
  return (
    <div className="flex min-h-screen flex-col border-r border-b border-l border-[#a4373a] bg-white font-['Open_Sans',sans-serif]">
      <TitleBar />
      <Ribbon />
      <DocTabs />
      <main className="flex flex-1 items-start font-['Liberation_Sans',Arial,sans-serif] text-black">
        <div className="w-[913px] shrink-0">
          <FormHeader />
          <FormTabs />
          <Details />
        </div>
        <SideButtons />
      </main>
      <RecordNav />
      <StatusBar />
    </div>
  );
}
